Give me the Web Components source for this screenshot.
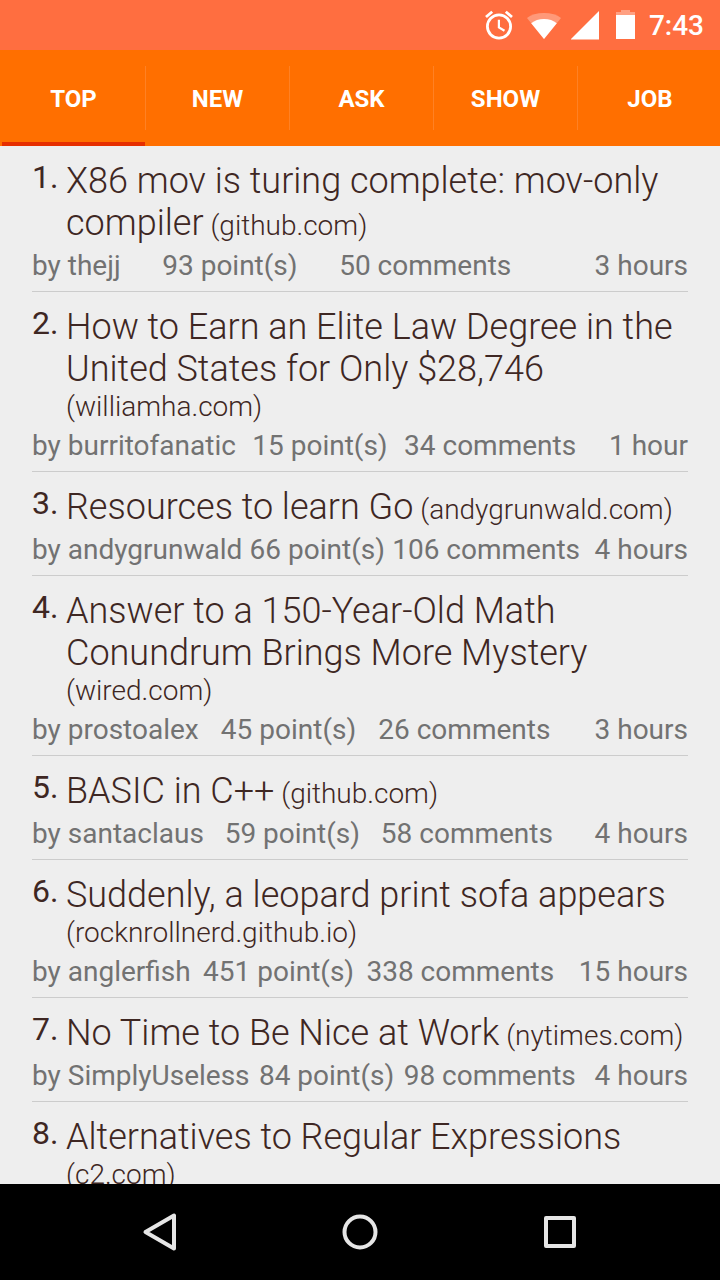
<!DOCTYPE html>
<html lang="en">
<head>
<meta charset="utf-8">
<meta name="viewport" content="width=device-width, initial-scale=1">
<title>Hacker News - Top stories</title>
<style>
  body { margin: 0; font-family: Roboto, "Noto Sans", sans-serif; background: #eeeeee; }
</style>
</head>
<body>
<hn-app>
  <status-bar slot="status">7:43</status-bar>
  <tab-bar slot="tabs">
    <tab-item selected>TOP</tab-item>
    <tab-item>NEW</tab-item>
    <tab-item>ASK</tab-item>
    <tab-item>SHOW</tab-item>
    <tab-item>JOB</tab-item>
  </tab-bar>
  <story-item rank="1" site="github.com" by="thejj" points="93" comments="50" age="3 hours">X86 mov is turing complete: mov-only compiler</story-item>
  <story-item rank="2" site="williamha.com" by="burritofanatic" points="15" comments="34" age="1 hour">How to Earn an Elite Law Degree in the United States for Only $28,746</story-item>
  <story-item rank="3" site="andygrunwald.com" by="andygrunwald" points="66" comments="106" age="4 hours">Resources to learn Go</story-item>
  <story-item rank="4" site="wired.com" by="prostoalex" points="45" comments="26" age="3 hours">Answer to a 150-Year-Old Math Conundrum Brings More Mystery</story-item>
  <story-item rank="5" site="github.com" by="santaclaus" points="59" comments="58" age="4 hours">BASIC in C++</story-item>
  <story-item rank="6" site="rocknrollnerd.github.io" by="anglerfish" points="451" comments="338" age="15 hours">Suddenly, a leopard print sofa appears</story-item>
  <story-item rank="7" site="nytimes.com" by="SimplyUseless" points="84" comments="98" age="4 hours">No Time to Be Nice at Work</story-item>
  <story-item rank="8" site="c2.com">Alternatives to Regular Expressions</story-item>
  <nav-bar slot="nav"></nav-bar>
</hn-app>

<script>
class ShadowElement extends HTMLElement {
  constructor() {
    super();
    this.attachShadow({ mode: "open" });
  }
  connectedCallback() {
    this.shadowRoot.innerHTML = this.render();
  }
}

customElements.define("hn-app", class extends ShadowElement {
  render() {
    return `
      <style>
        :host { display: flex; flex-direction: column; height: 100vh; }
        header, footer { flex: none; }
        header { overflow: hidden; }
        main { flex: 1; min-height: 0; overflow-y: auto; scrollbar-width: none; padding: 0 32px; }
      </style>
      <header><slot name="status"></slot><slot name="tabs"></slot></header>
      <main><slot></slot></main>
      <footer><slot name="nav"></slot></footer>`;
  }
});

customElements.define("status-bar", class extends ShadowElement {
  render() {
    return `
      <style>
        :host { display: flex; align-items: center; justify-content: flex-end; gap: 10px;
          box-sizing: border-box; height: 50px; padding: 0 16px; background: #ff6e40; color: #fff;
          font-size: 28px; font-weight: 500; line-height: 32px; }
        svg { display: block; flex: none; }
        time { padding-top: 2px; }
      </style>
      <svg width="32" height="32" viewBox="1 0 32 32" fill="none" stroke="#fff" aria-label="Alarm">
        <circle cx="15" cy="17.500" r="11.600" stroke-width="2.800"/>
        <path d="M14.900 10.800v7.600l5.600 3.400" stroke-width="2.200"/>
        <path d="M2 8l6.200-5.200M28 8l-6.200-5.200" stroke-width="2.800"/>
      </svg>
      <svg width="34" height="32" viewBox="0 0 34 32" fill="#fff" aria-label="Wi-Fi">
        <path d="M17 30L0 9C4 5.800 10 4 17 4s13 1.800 17 5z" opacity=".3"/>
        <path d="M17 30L4.200 14.200C7.500 11.500 12 10 17 10s9.500 1.500 12.800 4.200z"/>
      </svg>
      <svg width="28" height="32" viewBox="0 0 28 32" fill="#fff" aria-label="Signal">
        <path d="M-.5 30.500H28V2z"/>
      </svg>
      <svg width="30" height="32" viewBox="-7 0 30 32" fill="#fff" aria-label="Battery">
        <path d="M0 6V3h5V1h9v2h5v3z" opacity=".35"/>
        <path d="M0 6h19v24H0z"/>
      </svg>
      <time><slot></slot></time>`;
  }
});

customElements.define("tab-bar", class extends ShadowElement {
  render() {
    return `
      <style>
        :host { display: flex; height: 96px; margin-right: -2px; padding-left: 2px; background: #ff6f00; }
      </style>
      <slot></slot>`;
  }
});

customElements.define("tab-item", class extends ShadowElement {
  render() {
    return `
      <style>
        :host { display: flex; align-items: center; flex: 1 1 0; min-width: 0; }
        button { flex: 1; min-width: 0; align-self: stretch; margin: 0; padding: 6px 0 0; border: 0;
          border-bottom: 4px solid transparent; background: none; color: #fff; font-family: inherit;
          font-size: 24px; font-weight: 700; line-height: 28px; cursor: pointer; }
        :host([selected]) button { border-bottom-color: #e62e00; }
        :host(:not(:last-child))::after { content: ""; width: 1px; height: 64px; background: #ff8124; }
      </style>
      <button type="button"><slot></slot></button>`;
  }
});

customElements.define("story-item", class extends ShadowElement {
  render() {
    const get = name => this.getAttribute(name);
    const meta = this.hasAttribute("by") ? `
      <div class="meta">
        <span>by ${get("by")}</span>
        <span>${get("points")} point(s)</span>
        <span>${get("comments")} comments</span>
        <span class="age">${get("age")}</span>
      </div>` : "";
    return `
      <style>
        :host { display: block; padding: 14px 0 8px; border-bottom: 1px solid #cccccc; color: #3e2723; }
        :host(:last-of-type) { border-bottom: 0; }
        .head { display: grid; grid-template-columns: 34px 1fr; align-items: start; }
        .rank { font-size: 32px; line-height: 34px; }
        .title { margin: 0; font-size: 28px; font-weight: 300; line-height: 34px; }
        a { color: inherit; text-decoration: none; font-size: 36px; line-height: 42px; }
        .site { white-space: nowrap; }
        .meta { display: flex; margin-top: 5px; color: #727272; font-size: 28px; line-height: 34px; white-space: nowrap; }
        .meta span { flex: 1 1 auto; }
        .meta .age { text-align: right; }
      </style>
      <article>
        <div class="head">
          <span class="rank">${get("rank")}.</span>
          <h2 class="title"><a href="#story-${get("rank")}"><slot></slot></a> <span class="site">(${get("site")})</span></h2>
        </div>${meta}
      </article>`;
  }
});

customElements.define("nav-bar", class extends ShadowElement {
  render() {
    return `
      <style>
        :host { display: flex; justify-content: center; gap: 100px; height: 96px; background: #000; }
        button { display: flex; align-items: center; justify-content: center; width: 100px;
          margin: 0; padding: 0; border: 0; background: none; cursor: pointer; }
        svg { fill: none; stroke: #e6e6e6; stroke-width: 4; stroke-linejoin: round; }
      </style>
      <button type="button" aria-label="Back">
        <svg width="40" height="40" viewBox="0 0 40 40"><path d="M34 3.500v33L5.500 20z"/></svg>
      </button>
      <button type="button" aria-label="Home">
        <svg width="40" height="40" viewBox="0 0 40 40"><circle cx="20" cy="20" r="15.500"/></svg>
      </button>
      <button type="button" aria-label="Recent apps">
        <svg width="40" height="40" viewBox="0 0 40 40"><path d="M6 6h28v28H6z"/></svg>
      </button>`;
  }
});
</script>
</body>
</html>
